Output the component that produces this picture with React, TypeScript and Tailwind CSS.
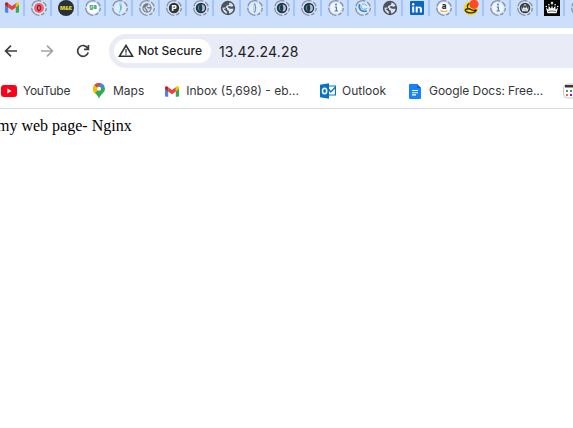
import React from "react";

type Kind =
  | "gmail" | "opera" | "me" | "ga" | "feather" | "ringGlobe" | "p" | "moon"
  | "globe" | "bracket" | "info" | "swirl" | "linkedin" | "amazon" | "yellow"
  | "crownRing" | "crown" | "edge";

const tabs: Kind[] = [
  "gmail", "opera", "me", "ga", "feather", "ringGlobe", "p", "moon", "globe", "bracket", "moon",
  "moon", "info", "swirl", "globe", "linkedin", "amazon", "yellow", "info", "crownRing", "crown", "edge",
];

const ringed: Kind[] = ["opera", "ga", "feather", "ringGlobe", "p", "moon", "bracket", "info", "swirl", "amazon", "crownRing", "edge"];

function Gmail({ className = "" }: { className?: string }) {
  return (
    <svg viewBox="0 0 24 18" className={className}>
      <path d="M0 2.5V16.4Q0 18 1.6 18H5.5V8Z" fill="#4285f4" />
      <path d="M18.5 18h3.9q1.6 0 1.6-1.6V2.5L18.5 8Z" fill="#34a853" />
      <path d="M18.5 1.6V8.8L24 4.7V2.5c0-2.2-2.5-3.2-4.1-2Z" fill="#fbbc04" />
      <path d="M5.5 8.8V1.6L12 6.5l6.5-4.9v7.2L12 13.7Z" fill="#ea4335" />
      <path d="M0 2.5v2.2l5.5 4.1V1.6L4.1.5C2.5-.7 0 .3 0 2.5Z" fill="#c5221f" />
    </svg>
  );
}

function GlobeShape({ scale = 1, color = "#505356" }: { scale?: number; color?: string }) {
  return (
    <g transform={`translate(8 8) scale(${scale}) translate(-8 -8)`}>
      <circle cx="8" cy="8" r="7.2" fill={color} />
      <path d="M9.3 2.4c2.2.4 3.7 1.8 4.2 3.7l-2 .7-2.6-.7-1.4 1L9.9 8.7h3.7c-.4 2.6-2.2 4.4-4.5 4.9L8.8 11 7 9.6V8.2L4.8 7.5 2.4 7.8c0 3 2 5.3 4.6 5.9L6.7 11.5 3.6 9l2-.6.8-2.6 2.8-1Z" fill="#d5e4fa" />
    </g>
  );
}

function Crown({ scale = 1 }: { scale?: number }) {
  return (
    <g transform={`translate(8 8) scale(${scale}) translate(-8 -8)`}>
      <g fill="#fff">
        <path d="M7.3.8h1.4v3H7.3Z" /><path d="M6.5 1.5h3v1.3h-3Z" />
        <circle cx="4.4" cy="4.3" r=".9" /><circle cx="11.6" cy="4.3" r=".9" />
        <circle cx="1.4" cy="6.3" r=".9" /><circle cx="14.6" cy="6.3" r=".9" />
        <path d="m1 7.3 2.8 2.8.4-4.6 2.6 3.4L8 4.8l1.2 4.1 2.6-3.4.4 4.6L15 7.3l-1.7 6.8H2.7Z" />
      </g>
      <path d="M3.2 12q4.8-1.3 9.6 0" fill="none" stroke="#222" strokeWidth=".8" />
    </g>
  );
}

function TabIcon({ kind }: { kind: Kind }) {
  if (kind === "gmail") return <Gmail className="h-[11px] w-[14px]" />;
  return (
    <svg viewBox="0 0 16 16" className="size-4 shrink-0 overflow-visible">
      {ringed.includes(kind) && (
        <>
          <circle cx="8" cy="8" r="5.8" fill={kind === "ga" || kind === "amazon" ? "#fff" : "#e2ecfb"} />
          <circle cx="8" cy="8" r="7.3" fill="none" stroke="#8791a1" strokeWidth="1.3" strokeDasharray="3.6 1.9 3.6 1.9 12 1.6 12 1.9 5.4 2" />
        </>
      )}
      {kind === "opera" && <><circle cx="8" cy="8" r="5" fill="#f6606d" /><ellipse cx="8" cy="8" rx="1.6" ry="2.6" fill="#c7727b" stroke="#87222e" strokeWidth="1.1" /></>}
      {kind === "me" && <><circle cx="8" cy="8" r="8" fill="#263238" /><text x="8" y="9.9" textAnchor="middle" fontFamily="Inter" fontSize="5.3" fontWeight="900" fill="#dfcc35">M&amp;E</text></>}
      {kind === "ga" && <text x="8" y="9.3" textAnchor="middle" fontFamily="Inter" fontSize="6" fontWeight="800" fill="#27a36a">ga</text>}
      {kind === "feather" && <><path d="M7 3q5 4 0 10 2-5 0-10" fill="#42c8ce" /><path d="M8.5 3q3 5-1.5 10" fill="none" stroke="#8fc2e5" strokeWidth="1" /></>}
      {kind === "ringGlobe" && <GlobeShape scale={0.65} color="#747b84" />}
      {kind === "p" && <><circle cx="8" cy="8" r="5.2" fill="#303337" /><text x="8.2" y="10.8" textAnchor="middle" fontFamily="Inter" fontSize="8" fontWeight="800" fill="#fff">P</text></>}
      {kind === "moon" && <><circle cx="8" cy="8" r="5.3" fill="#293449" /><path d="M7 4.8a3.4 3.4 0 0 0 0 6.4A6 6 0 0 1 7 4.8Z" fill="#18afa1" /><path d="M8.4 4.5a3.5 3.5 0 0 1 0 7Q10.3 8 8.4 4.5Z" fill="#b3c1d7" /></>}
      {kind === "globe" && <GlobeShape />}
      {kind === "bracket" && <><path d="M7 3.5q1.8 1 1.2 3.3-.1 1 1 1.2-1.1.2-1 1.2Q8.8 11.5 7 12.5" fill="none" stroke="#6687cf" strokeWidth="1.1" /><path d="M6.5 4v8" stroke="#b9d9a0" strokeWidth=".8" /></>}
      {kind === "info" && <><circle cx="8" cy="8" r="5.6" fill="#f1f5fe" /><path d="M6.7 7H8.4v4M6.5 11h3.5" fill="none" stroke="#5077bf" strokeWidth="1.2" /><circle cx="8" cy="4.6" r="1" fill="#5077bf" /></>}
      {kind === "swirl" && <><path d="M4.7 4.2C2.8 8.5 6.5 13 11.8 10.7" fill="none" stroke="#3b87c5" strokeWidth="1.7" /><path d="M6 5.3C6 9 9 10.5 12.2 8.2M7 4q3-1 5 2" fill="none" stroke="#68a9db" /></>}
      {kind === "linkedin" && <><rect x="1" y="1" width="14" height="14" rx="1" fill="#0a66c2" /><path d="M3.2 6.5h2v6h-2ZM6.7 6.5h2v.9c1.1-1.7 4.2-1.2 4.2 1.5v3.6h-2V9.4c0-1.8-2.2-1.8-2.2 0v3.1h-2Z" fill="#fff" /><circle cx="4.2" cy="4.3" r="1.2" fill="#fff" /></>}
      {kind === "amazon" && <><text x="8" y="9.2" textAnchor="middle" fontFamily="Inter" fontSize="8" fontWeight="800" fill="#292d32">a</text><path d="M4.3 10.5q3.5 2.5 7.2 0" fill="none" stroke="#f3a345" strokeWidth="1.1" /></>}
      {kind === "yellow" && <><circle cx="7.8" cy="8.2" r="7.2" fill="#f8d52b" /><path d="M6.5 3.2Q3.2 5.5 5 7.8M2 9.7q1 3.2 6 3.2 4.8-.3 5.5-3.2M2 9.7Q6 7.8 8 9.5T13.5 9.7" fill="none" stroke="#2c3027" strokeWidth="1.4" /><circle cx="11" cy="4.3" r="4.6" fill="#ff4b24" /></>}
      {kind === "crownRing" && <><circle cx="8" cy="8" r="5.3" fill="#353c45" /><Crown scale={0.52} /></>}
      {kind === "crown" && <><path d="M0 0h16v16H0Z" fill="#000" /><Crown scale={0.86} /></>}
    </svg>
  );
}

function Bookmark({ icon, label, className, textClass }: { icon: React.ReactNode; label: string; className: string; textClass: string }) {
  return (
    <div className={`flex shrink-0 items-center ${className}`}>
      {icon}
      <span className={`whitespace-nowrap ${textClass}`}>{label}</span>
    </div>
  );
}

export default function App() {
  return (
    <div className="h-[428px] w-[573px] overflow-hidden bg-white font-['Inter',sans-serif]">
      <div className="h-7 overflow-hidden bg-[#cbdefb]">
        <div className="-ml-[2px] flex h-4 w-[594px]">
          {tabs.map((kind, index) => (
            <div key={index} className="flex h-4 w-[27px] shrink-0 items-center">
              <div className="-mt-px flex w-[25px] justify-center pl-[3px]"><TabIcon kind={kind} /></div>
              <div className="h-4 w-0.5 bg-[#a3c5fa]" />
            </div>
          ))}
        </div>
      </div>

      <div className="flex h-[46px] items-center text-[#202124]">
        <svg viewBox="0 0 16 16" className="ml-[3px] size-4 shrink-0 fill-none stroke-[#3c4043] stroke-[1.7]"><path d="M14 8H3M8 2.6 2.6 8 8 13.4" /></svg>
        <svg viewBox="0 0 16 16" className="ml-5 size-4 shrink-0 fill-none stroke-[#a4a4a4] stroke-[1.7]"><path d="M2 8h11M8 2.6 13.4 8 8 13.4" /></svg>
        <svg viewBox="0 0 16 16" className="ml-5 size-4 shrink-0 fill-none stroke-[#3c4043] stroke-[1.7]"><path d="M12.7 5.2A5.4 5.4 0 1 0 13.2 9.5M13.4 2v4.4H9" /></svg>
        <div className="ml-[18px] flex h-[34px] w-[500px] shrink-0 items-center rounded-l-full bg-[#e9ebf6] pl-[5px]">
          <div className="flex h-6 w-[97px] items-center rounded-full bg-white pl-1">
            <svg viewBox="0 0 16 14" className="h-[14px] w-4 shrink-0 fill-none stroke-[#303134] stroke-[1.6]"><path d="M8 1.5 14.5 12.2H1.5Z" /><path d="M8 5.3v3.4M8 9.5v1.3" strokeWidth="1.3" /></svg>
            <span className="ml-1 whitespace-nowrap text-[12px] font-medium">Not Secure</span>
          </div>
          <span className="ml-2 text-[14px] tracking-[0.15px]">13.42.24.28</span>
        </div>
      </div>

      <div className="flex h-[35px] items-center border-b border-[#dadce0] text-[12px] text-[#36373a]">
        <Bookmark className="ml-px w-[69px]" textClass="ml-[6px] tracking-[-0.3px]" label="YouTube" icon={<svg viewBox="0 0 16 12" className="h-3 w-4 shrink-0"><rect width="16" height="12" rx="3" fill="#ff0018" /><path d="m6.3 3.5 4.3 2.5-4.3 2.5Z" fill="#fff" /></svg>} />
        <Bookmark className="ml-[23px]" textClass="ml-[8px]" label="Maps" icon={<svg viewBox="0 0 12 16" className="h-4 w-3"><path d="M6 0a6 6 0 0 0-6 6c0 4 5 5 6 10 1-5 6-6 6-10a6 6 0 0 0-6-6Z" fill="#34a853" /><path d="M1.5 2 6 6 1.7 10.5C-.7 7.7-.3 4 1.5 2Z" fill="#fbbc04" /><path d="m1.4 2.1 3 2.7L8 .4C5-.6 2.5.5 1.4 2.1Z" fill="#ea4335" /><path d="m7.9.3-4 5L6.5 7l4.8-4.3A6 6 0 0 0 7.9.3Z" fill="#4285f4" /><circle cx="6" cy="5.8" r="2" fill="#fff" /></svg>} />
        <Bookmark className="ml-[21px]" textClass="ml-[7px]" label="Inbox (5,698) - eb..." icon={<Gmail className="h-[11px] w-[14px]" />} />
        <Bookmark className="ml-[21px]" textClass="ml-[6px]" label="Outlook" icon={<svg viewBox="0 0 16 16" className="size-4"><path d="M8 3h7.5v9H8Z" fill="#fff" stroke="#0872c4" strokeWidth="1.2" /><path d="m8.5 6 2.3 3 4.7-5" fill="none" stroke="#0872c4" strokeWidth="1.4" /><path d="m0 1.8 9-1.6v15.6l-9-1.6Z" fill="#0872c4" /><ellipse cx="4.6" cy="8" rx="2.1" ry="2.8" fill="none" stroke="#fff" strokeWidth="1.5" /></svg>} />
        <Bookmark className="ml-[23px]" textClass="ml-[8px] tracking-[-0.06px]" label="Google Docs: Free..." icon={<svg viewBox="0 0 12 15" className="h-[15px] w-3"><path d="M1 0h7l4 4v10a1 1 0 0 1-1 1H1a1 1 0 0 1-1-1V1a1 1 0 0 1 1-1Z" fill="#1681ff" /><path d="m8 0 4 4H8Z" fill="#0866dc" /><path d="M3 6.5h6M3 8.7h6M3 10.9h4" stroke="#fff" strokeWidth="1.1" /></svg>} />
        <svg viewBox="0 0 16 16" className="ml-5 size-4 shrink-0"><rect x=".6" y="1" width="15" height="14" rx="4" fill="#fff" stroke="#c6c6c6" /><path d="M2 2h14v2.5H2Z" fill="#36383c" /><path d="M3 7h2v2H3Z" fill="#37a365" /><path d="M7 7h2v2H7Z" fill="#777" /><path d="M3 11h2v2H3Z" fill="#ee6847" /><path d="M7 11h2v2H7Z" fill="#6d18db" /></svg>
      </div>

      <main className="-ml-[3px] mt-[7px] whitespace-nowrap font-['Liberation_Serif',serif] text-[16px] leading-5 text-black">my web page- Nginx</main>
    </div>
  );
}
